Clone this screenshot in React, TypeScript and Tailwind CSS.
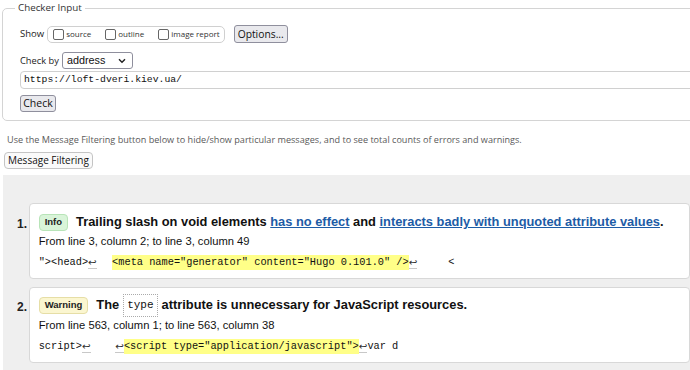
import React from "react";

const sans = { fontFamily: '"Open Sans", "Noto Sans", sans-serif' };
const arial = { fontFamily: '"Liberation Sans", Arial, sans-serif' };
const mono = { fontFamily: '"Liberation Mono", "DejaVu Sans Mono", monospace' };

function Ret() {
  return (
    <span className="inline-block border-b border-[#c8c8c8] leading-[12px] text-[#333]" style={{ fontFamily: '"DejaVu Sans", sans-serif' }}>
      ↩
    </span>
  );
}

function Checkbox({ label }: { label: string }) {
  return (
    <span className="flex items-center gap-[2px] whitespace-nowrap">
      <span className="inline-block w-[11px] h-[11px] border border-[#666] rounded-[2px] bg-white" />
      <span className="text-[8px] text-[#333]">{label}</span>
    </span>
  );
}

export default function App() {
  return (
    <div className="w-[690px] h-[370px] bg-white overflow-hidden relative text-[#222]" style={sans}>
      <div className="pl-[2px] w-[720px]">
        <fieldset className="border border-[#d4d4d4] rounded-[5px] pb-[7px]">
          <legend className="ml-[12px] px-[3px] text-[9.8px] leading-[16px] text-[#333]">Checker Input</legend>
          <div className="pl-[17px]">
            <div className="flex items-center mt-[9px] h-[18px]">
              <span className="text-[9.5px] text-[#222] mr-[3px]">Show</span>
              <div className="flex items-center h-[17px] border border-[#d0d0d0] rounded-[5px] pl-[5px] pr-[4px] gap-[14px]">
                <Checkbox label="source" />
                <Checkbox label="outline" />
                <Checkbox label="image report" />
              </div>
              <button className="ml-[9px] h-[18px] px-[3px] bg-[#e9e9ed] border border-[#8f8f9d] rounded-[3px] text-[10.3px] leading-[14px] text-[#111]" style={sans}>
                Options...
              </button>
            </div>
            <div className="flex items-center mt-[9px] h-[17px]">
              <span className="text-[9.3px] text-[#222] mr-[3px]">Check by</span>
              <div className="relative flex items-center w-[71px] h-[17px] border border-[#8f8f9d] rounded-[3px] bg-white pl-[4px] text-[10.8px] text-[#111]" style={arial}>
                address
                <svg className="absolute right-[6px] top-[5px]" width="8" height="6" viewBox="0 0 8 6">
                  <path d="M1 1.2 L4 4.3 L7 1.2" fill="none" stroke="#222" strokeWidth="1.4" />
                </svg>
              </div>
            </div>
            <div className="mt-[2px] h-[18px] w-[690px] border border-[#d0d0d0] rounded-[4px] flex items-center pl-[3px] text-[9.75px] text-[#111]" style={mono}>
              https://loft-dveri.kiev.ua/
            </div>
            <button className="mt-[5px] h-[17px] w-[36px] bg-[#e9e9ed] border border-[#8f8f9d] rounded-[3px] text-[10.5px] leading-[14px] text-[#111]" style={sans}>
              Check
            </button>
          </div>
        </fieldset>
      </div>
      <p className="ml-[7px] mt-[12px] text-[9.1px] leading-[13px] text-[#5a5a5a] whitespace-nowrap">
        Use the Message Filtering button below to hide/show particular messages, and to see total counts of errors and warnings.
      </p>
      <button className="ml-[4px] mt-[3px] h-[17px] px-[3px] bg-[#fafafa] border border-[#c4c4c4] rounded-[4px] text-[10px] leading-[14px] text-[#111]" style={sans}>
        Message Filtering
      </button>
      <div className="ml-[3px] mt-[5px] bg-[#efefef] h-[200px] pt-[28px] pl-[14px]" style={arial}>
        <div className="flex">
          <div className="w-[12px] pt-[12px] text-[12px] font-bold text-[#222]">1.</div>
          <div className="w-[680px] h-[76px] bg-white border border-[#d8d8d8] rounded-[4px] pl-[9px] pt-[9px]">
            <div className="flex items-center h-[18px]">
              <span className="inline-flex items-center h-[17px] px-[5px] bg-[#d9f4d9] border border-[#b8e4b8] rounded-[4px] text-[9.5px] font-bold text-[#222]">Info</span>
              <span className="ml-[8px] text-[12.85px] font-bold text-[#111] whitespace-nowrap">
                Trailing slash on void elements{" "}
                <span className="text-[#1d5ca6] underline">has no effect</span> and{" "}
                <span className="text-[#1d5ca6] underline">interacts badly with unquoted attribute values</span>.
              </span>
            </div>
            <div className="mt-[3px] text-[11.2px] leading-[14px] text-[#111] whitespace-nowrap">From line 3, column 2; to line 3, column 49</div>
            <div className="mt-[7px] text-[10.3px] text-[#111] whitespace-pre flex items-center" style={mono}>
              <span>{'"><head>'}</span>
              <Ret />
              <span>{"  "}</span>
              <span className="bg-[#ffff88] ml-[3px]">{'<meta name="generator" content="Hugo 0.101.0" />'}</span>
              <Ret />
              <span>{"     <"}</span>
            </div>
          </div>
        </div>
        <div className="flex mt-[8px]">
          <div className="w-[12px] pt-[11px] text-[12px] font-bold text-[#222]">2.</div>
          <div className="w-[680px] h-[76px] bg-white border border-[#d8d8d8] rounded-[4px] pl-[9px] pt-[5px]">
            <div className="flex items-center h-[24px]">
              <span className="inline-flex items-center h-[17px] px-[5px] bg-[#fbf6d0] border border-[#e6dea6] rounded-[4px] text-[9.5px] font-bold text-[#222]">Warning</span>
              <span className="ml-[8px] text-[12.85px] font-bold text-[#111] whitespace-nowrap flex items-center">
                The
                <span className="mx-[4px] inline-flex items-center h-[23px] px-[3px] border border-dotted border-[#aaa] font-normal text-[11px]" style={mono}>type</span>
                attribute is unnecessary for JavaScript resources.
              </span>
            </div>
            <div className="mt-[1px] text-[11.2px] leading-[14px] text-[#111] whitespace-nowrap">From line 563, column 1; to line 563, column 38</div>
            <div className="mt-[7px] text-[10.3px] text-[#111] whitespace-pre flex items-center" style={mono}>
              <span>script&gt;</span>
              <Ret />
              <span>{"    "}</span>
              <Ret />
              <span className="bg-[#ffff88]">{'<script type="application/javascript">'}</span>
              <Ret />
              <span>var d</span>
            </div>
          </div>
        </div>
      </div>
    </div>
  );
}
